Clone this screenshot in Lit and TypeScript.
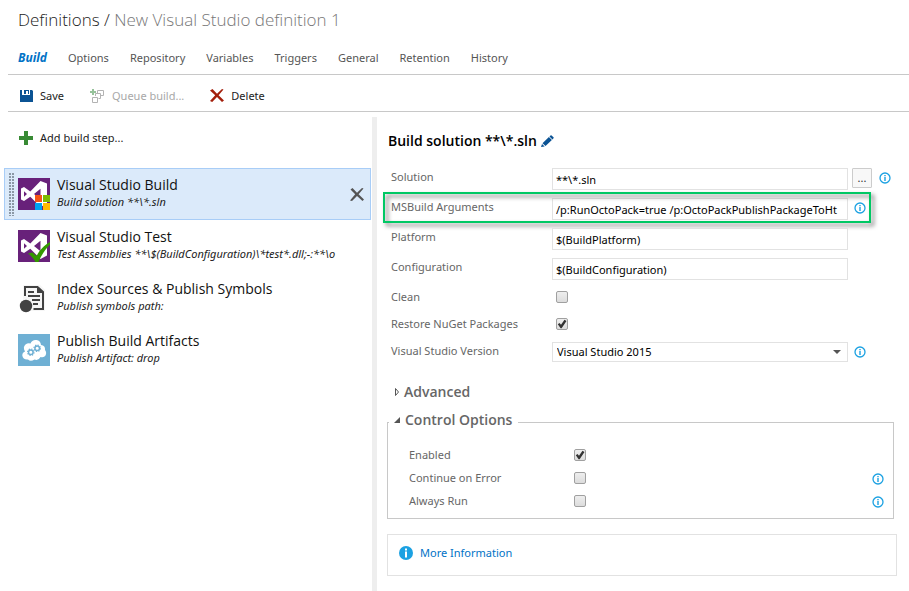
import { LitElement, html, css, svg, nothing } from "lit";
import { customElement, property } from "lit/decorators.js";
import { classMap } from "lit/directives/class-map.js";

const saveIcon = html`<svg width="13" height="12" viewBox="0 0 13 12" aria-hidden="true">
  <path fill="#0b5394" d="M0 0H2V5H10V0H12L13 1V12H0Z M4 0H9V4H8V1H6V4H4Z" fill-rule="evenodd"/>
</svg>`;

const queueIcon = html`<svg width="15" height="14" viewBox="0 0 15 14" aria-hidden="true">
  <path fill="#96c29a" d="M2 0H4V2H6V4H4V6H2V4H0V2H2Z"/>
  <path fill="none" stroke="#b3b3b3" d="M7.500 4V1.500H13.500V6.500H11M5.500 7V4.500H10.500V9.500H8.500M2.500 8.500H7.500V13.500H2.500Z"/>
</svg>`;

const deleteIcon = html`<svg width="14" height="13" viewBox="0 0 14 13" aria-hidden="true">
  <path fill="#a31f0c" d="M0 1.500L2.500 0L7 4.800L12 0L13.500 0.500L8.600 6.200L14 11.500L12 13L7 8L2.200 13L0 12L5.200 6.300Z"/>
</svg>`;

const plusIcon = html`<svg width="14" height="14" viewBox="0 0 14 14" aria-hidden="true">
  <path fill="#388a34" d="M5 0H9V5H14V9H9V14H5V9H0V5H5Z"/>
</svg>`;

const closeIcon = html`<svg width="14" height="13" viewBox="0 0 14 13" aria-hidden="true">
  <path fill="#555" d="M0.500 1.500L2.500 0L7 4.800L12 0L13.500 0.500L8.600 6.200L14 11.500L12.500 13L7 8L2 13L0 12.500L5.200 6.300Z"/>
</svg>`;

const pencilIcon = html`<svg width="13" height="12" viewBox="0 0 13 12" aria-hidden="true">
  <path fill="#0b5394" d="M9.500 0.500Q10 0 10.600 0.500L12.500 2.300Q13 2.800 12.500 3.300L11.500 4.400L8.500 1.500ZM7.900 2.100L10.900 5L4.500 11L1.500 8.200ZM1 8.900L3.700 11.400L0 12Z"/>
</svg>`;

const infoIcon = html`<svg width="12" height="12" viewBox="0 0 12 12" role="img" aria-label="Info">
  <circle cx="6" cy="6" r="5" fill="#fff" stroke="#1ba1e2" stroke-width="1.300"/>
  <path fill="#1ba1e2" d="M5.300 3H6.700V4.200H5.300ZM5.300 5H6.700V9H5.300Z"/>
</svg>`;

const infoSolid = html`<svg width="14" height="14" viewBox="0 0 14 14" aria-hidden="true">
  <circle cx="7" cy="7" r="7" fill="#1ba1e2"/>
  <path fill="#fff" d="M6 2.500H8V4.500H6ZM6 5.500H8V11.500H6Z"/>
</svg>`;

const vsMark = svg`
  <rect width="32" height="32" fill="#68217a"/>
  <path fill="#fff" fill-rule="evenodd" d="M22.500 3L29 5.500V25.500L22.500 29L12.300 18.700L6 23L3 21.500V10.500L6 9L12.300 13.500ZM6 13.300V18.800L9 16ZM22.500 10.700L16 16L22.500 21.300Z"/>`;

const stepIcons = {
  build: html`<svg width="32" height="32" viewBox="0 0 32 32" aria-hidden="true">${vsMark}
    <path fill="#f65314" d="M17 17H24V24H17Z"/><path fill="#7cbb00" d="M25 17H32V24H25Z"/>
    <path fill="#00a1f1" d="M17 25H24V32H17Z"/><path fill="#ffbb00" d="M25 25H32V32H25Z"/>
  </svg>`,
  test: html`<svg width="32" height="32" viewBox="0 0 32 32" aria-hidden="true">${vsMark}
    <path fill="#339900" d="M10 23.500L14.500 22.500L18.500 26C22 19.500 26 15.500 32 12V14.500C27 19.500 23.500 25 20.500 32H17.500C15.500 28.500 13.500 26 10 23.500Z"/>
  </svg>`,
  symbols: html`<svg width="32" height="32" viewBox="0 0 32 32" aria-hidden="true">
    <path fill="#f6f6f6" d="M5 3H22L27 8V29H5Z"/>
    <path fill="none" stroke="#424242" stroke-width="2" d="M7 14V5H19.500L25 10V27H15.500"/>
    <path fill="#424242" d="M19 4L26 11H19ZM10 9H16V11H10ZM10 13H22V15H10ZM14 17H22V19H14ZM15 21H20V23H15Z"/>
    <circle cx="8" cy="24" r="6.200" fill="#424242"/>
  </svg>`,
  artifacts: html`<svg width="32" height="32" viewBox="0 0 32 32" aria-hidden="true">
    <rect width="32" height="32" fill="#6fb0d4"/>
    <path fill="#fff" d="M10 25.500Q5 26 4.300 21.500Q4.200 18.500 7 17.500Q4.500 13 7.500 10.500Q10 8.500 12.500 9.500Q14 5.500 18.500 6Q22.500 6.700 23 11Q27.500 11.500 27 16Q29 18.500 27.500 21.500Q26 24 22.500 23Q20.500 27 16.500 25.500Q12.500 28 10 25.500Z"/>
    <circle cx="12.800" cy="18.200" r="2.300" fill="none" stroke="#6fb0d4" stroke-width="1.500"/>
    <circle cx="12.800" cy="18.200" r="3.200" fill="none" stroke="#6fb0d4" stroke-width="1.200" stroke-dasharray="1.250 1.260"/>
    <circle cx="19.200" cy="14.200" r="2.300" fill="none" stroke="#6fb0d4" stroke-width="1.500"/>
    <circle cx="19.200" cy="14.200" r="3.200" fill="none" stroke="#6fb0d4" stroke-width="1.200" stroke-dasharray="1.250 1.260"/>
  </svg>`,
};

interface Step {
  icon: keyof typeof stepIcons;
  name: string;
  detail: string;
}

const steps: Step[] = [
  { icon: "build", name: "Visual Studio Build", detail: "Build solution **\\*.sln" },
  { icon: "test", name: "Visual Studio Test", detail: "Test Assemblies **\\$(BuildConfiguration)\\*test*.dll;-:**\\o" },
  { icon: "symbols", name: "Index Sources & Publish Symbols", detail: "Publish symbols path:" },
  { icon: "artifacts", name: "Publish Build Artifacts", detail: "Publish Artifact: drop" },
];

const tabs = ["Build", "Options", "Repository", "Variables", "Triggers", "General", "Retention", "History"];

const controls = css`
  * { box-sizing: border-box; }
  svg { display: block; flex: none; }
  button {
    font: inherit;
    color: inherit;
    background: none;
    border: 0;
    padding: 0;
    cursor: pointer;
  }
`;

@customElement("step-list")
class StepList extends LitElement {
  @property({ type: Number }) selected = 0;

  static styles = [controls, css`
    :host { display: block; padding: 11px 1px 0 4px; }
    .add { display: flex; align-items: center; gap: 7px; height: 20px; margin: 0 0 20px 15px; color: #222; }
    .list { list-style: none; margin: 0; padding: 0; }
    .step {
      display: flex;
      align-items: center;
      height: 52px;
      padding: 0 6px 0 4px;
      border: 1px solid transparent;
    }
    .step.current { background: #dbeafa; border-color: #a8cdf7; }
    .grip { width: 5px; height: 44px; margin-right: 4px; flex: none; }
    .current .grip {
      background-image: linear-gradient(#dbeafa 1px, transparent 1px), linear-gradient(90deg, #8b98a5 2px, transparent 2px);
      background-size: 3px 3px, 3px 3px;
    }
    .pick { display: flex; align-items: center; gap: 7px; flex: 1; min-width: 0; text-align: left; }
    .words { display: block; flex: 1; min-width: 0; }
    .name, .detail { display: block; white-space: nowrap; }
    .name { font-family: "Open Sans", "Noto Sans", sans-serif; font-size: 14px; line-height: 16px; color: #111; }
    .detail { overflow: hidden; font-style: italic; line-height: 18px; color: #222; }
    .space { width: 16px; flex: none; }
  `];

  render() {
    return html`
      <button class="add">${plusIcon}Add build step...</button>
      <ul class="list">
        ${steps.map((s, i) => html`
          <li class=${classMap({ step: true, current: i === this.selected })}>
            <span class="grip"></span>
            <button class="pick" @click=${() => (this.selected = i)}>
              ${stepIcons[s.icon]}
              <span class="words"><span class="name">${s.name}</span><span class="detail">${s.detail}</span></span>
            </button>
            ${i === this.selected
              ? html`<button aria-label="Remove step">${closeIcon}</button>`
              : html`<span class="space"></span>`}
          </li>`)}
      </ul>`;
  }
}

@customElement("step-form")
class StepForm extends LitElement {
  static styles = [controls, css`
    :host { display: block; padding: 13px 12px 15px 10px; color: #666; }
    .title { display: flex; align-items: center; gap: 4px; margin: 0 0 16px 1px; height: 22px; font: 600 14px/20px "Open Sans", "Noto Sans", sans-serif; color: #000; }
    .row {
      position: relative;
      display: grid;
      grid-template-columns: 161px minmax(0, 1fr) 49px;
      height: 30px;
      padding-left: 4px;
    }
    .row.short { height: 27px; }
    .row.marked::after {
      content: "";
      position: absolute;
      inset: -6px 26px 5px -4px;
      border: 2px solid #00c864;
      filter: drop-shadow(3px 3px 2px #777);
      pointer-events: none;
    }
    label { line-height: 18px; }
    .text, .choice {
      font: inherit;
      color: #000;
      width: 100%;
      height: 22px;
      margin: 0;
      padding: 0 1px 0 3px;
      border: 1px solid #e2e2e2;
      border-radius: 0;
      background: #fff;
      outline: 0;
    }
    .pickbox { position: relative; }
    .choice { appearance: none; height: 20px; padding: 0 20px 0 4px; display: block; }
    .pickbox::after {
      content: "";
      position: absolute;
      right: 7px;
      top: 8px;
      border: 4px solid transparent;
      border-top-color: #555;
      border-bottom: 0;
    }
    .after { display: flex; align-items: start; gap: 7px; padding: 0 0 0 4px; }
    .after svg { margin: 4px 0 0 2px; }
    .browse {
      width: 20px;
      height: 20px;
      border: 1px solid #ccc;
      border-radius: 1px;
      background: #f8f8f8;
      color: #333;
      line-height: 18px;
    }
    .browse + svg { margin-left: 0; }
    .tick {
      appearance: none;
      width: 12px;
      height: 12px;
      margin: 3px 0 0 4px;
      border: 1px solid #a0a0a0;
      border-radius: 2px;
      background: linear-gradient(#eee, #dcdcdc);
    }
    .tick:checked::before {
      content: "";
      display: block;
      width: 10px;
      height: 10px;
      background: #333;
      clip-path: polygon(8% 52%, 25% 40%, 40% 58%, 75% 8%, 95% 20%, 46% 92%, 36% 92%);
    }
    .group { display: flex; align-items: center; gap: 4px; font: 600 14px/20px "Open Sans", "Noto Sans", sans-serif; }
    .advanced { margin: 13px 0 8px 6px; }
    .options { margin: 0 3px 0 0; padding: 12px 9px 3px 21px; border: 1px solid #c8c8c8; min-width: 0; }
    .options legend { margin-left: -20px; padding: 0 6px 4px 5px; }
    .option { display: grid; grid-template-columns: 161px 1fr 12px; height: 23px; }
    .option svg { margin-top: 4px; }
    .more { display: flex; align-items: start; gap: 7px; height: 42px; margin-top: 15px; padding: 9px 11px; border: 1px solid #e2e2e2; }
    .more svg { margin-top: 2px; }
    .more a { color: #0072c6; text-decoration: none; line-height: 18px; }
  `];

  private textRow(id: string, label: string, value: string, after: unknown = nothing, marked = false) {
    return html`<div class=${classMap({ row: true, marked })}>
      <label for=${id}>${label}</label>
      <input class="text" id=${id} type="text" .value=${value}>
      <span class="after">${after}</span>
    </div>`;
  }

  private tickRow(id: string, label: string, on: boolean) {
    return html`<div class="row short">
      <label for=${id}>${label}</label>
      <span><input class="tick" id=${id} type="checkbox" ?checked=${on}></span>
    </div>`;
  }

  private option(id: string, label: string, on: boolean, info: boolean) {
    return html`<div class="option">
      <label for=${id}>${label}</label>
      <span><input class="tick" id=${id} type="checkbox" ?checked=${on}></span>
      ${info ? infoIcon : nothing}
    </div>`;
  }

  render() {
    return html`
      <h2 class="title">Build solution **\\*.sln <button aria-label="Rename">${pencilIcon}</button></h2>
      ${this.textRow("solution", "Solution", "**\\*.sln", html`<button class="browse">...</button>${infoIcon}`)}
      ${this.textRow("args", "MSBuild Arguments", "/p:RunOctoPack=true /p:OctoPackPublishPackageToHt", infoIcon, true)}
      ${this.textRow("platform", "Platform", "$(BuildPlatform)")}
      ${this.textRow("config", "Configuration", "$(BuildConfiguration)")}
      ${this.tickRow("clean", "Clean", false)}
      ${this.tickRow("restore", "Restore NuGet Packages", true)}
      <div class="row short">
        <label for="version">Visual Studio Version</label>
        <span class="pickbox"><select class="choice" id="version"><option>Visual Studio 2015</option></select></span>
        <span class="after">${infoIcon}</span>
      </div>
      <button class="group advanced">
        <svg width="7" height="8" viewBox="0 0 7 8" aria-hidden="true"><path fill="none" stroke="#555" d="M2.500 0.500V7.500L5.500 4Z"/></svg>
        Advanced
      </button>
      <fieldset class="options">
        <legend><button class="group">
          <svg width="7" height="8" viewBox="0 0 7 8" aria-hidden="true"><path fill="#555" d="M6 1V7H0Z"/></svg>
          Control Options
        </button></legend>
        ${this.option("enabled", "Enabled", true, false)}
        ${this.option("continue", "Continue on Error", false, true)}
        ${this.option("always", "Always Run", false, true)}
      </fieldset>
      <div class="more">${infoSolid}<a href="#more">More Information</a></div>`;
  }
}

@customElement("app-root")
class AppRoot extends LitElement {
  static styles = [controls, css`
    :host {
      display: flex;
      flex-direction: column;
      min-height: 100vh;
      background: #fff;
      font: 11px/18px "Noto Sans", "Open Sans", sans-serif;
      color: #222;
    }
    .title { margin: 0; padding: 7px 18px 0; font: 300 17px/26px "Open Sans", "Noto Sans", sans-serif; color: #777; }
    .title a { color: #222; text-decoration: none; }
    .tabs { display: flex; gap: 21px; height: 42px; margin-left: 8px; padding: 16px 10px 0; border-bottom: 1px solid #c8c8c8; }
    .tabs a { color: #555; text-decoration: none; }
    .tabs .on { font-size: 12px; color: #0072c6; font-weight: 700; font-style: italic; }
    .tools { display: flex; align-items: center; gap: 26px; height: 37px; margin-left: 8px; padding: 5px 12px 0; border-bottom: 1px solid #c8c8c8; }
    .tool { display: flex; align-items: center; gap: 7px; }
    .tool:disabled { color: #a8a8a8; }
    .panes { flex: 1; display: grid; grid-template-columns: 372px 5px minmax(0, 1fr); padding-top: 5px; }
    .split { background: #eee; }
  `];

  render() {
    return html`
      <h1 class="title"><a href="#definitions">Definitions /</a> New Visual Studio definition 1</h1>
      <nav class="tabs">
        ${tabs.map((t, i) => html`<a href="#${t}" class=${classMap({ on: i === 0 })}>${t}</a>`)}
      </nav>
      <div class="tools">
        <button class="tool">${saveIcon}Save</button>
        <button class="tool" disabled>${queueIcon}Queue build...</button>
        <button class="tool">${deleteIcon}Delete</button>
      </div>
      <main class="panes">
        <step-list></step-list>
        <div class="split"></div>
        <step-form></step-form>
      </main>`;
  }
}
